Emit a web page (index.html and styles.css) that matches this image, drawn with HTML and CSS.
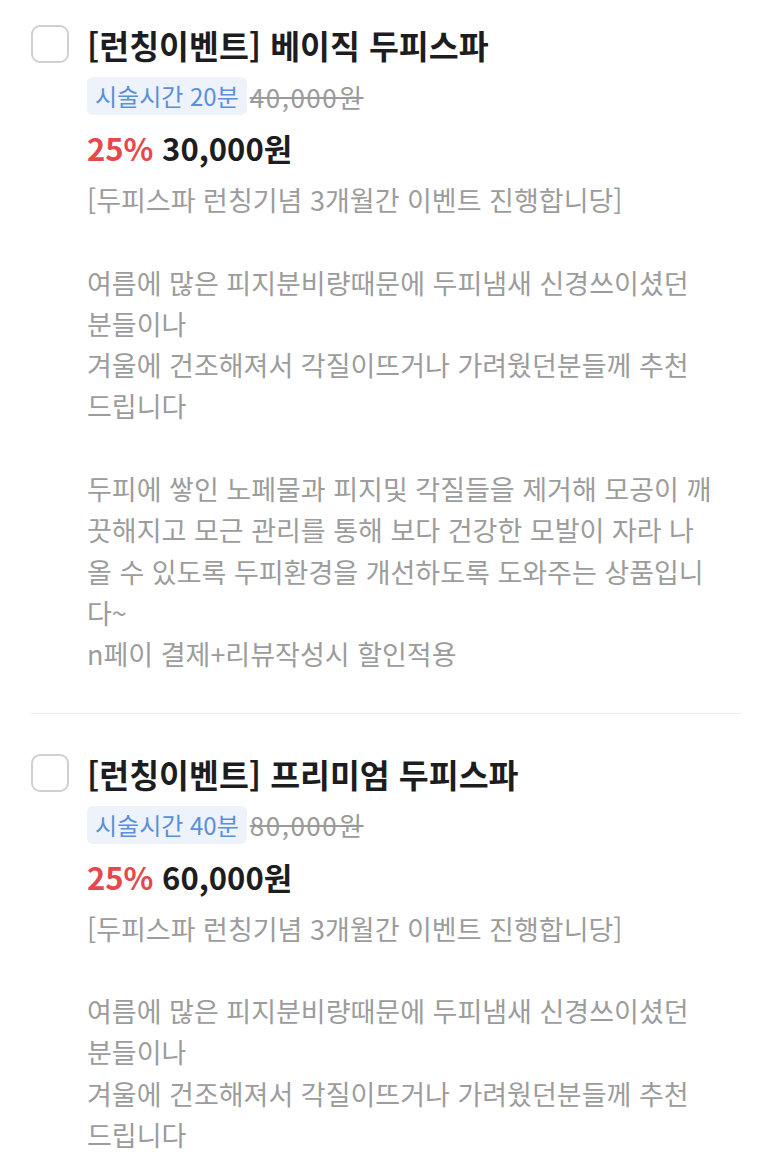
FILE: index.html
```html
<!DOCTYPE html>
<html lang="ko">
<head>
<meta charset="utf-8">
<link rel="stylesheet" href="styles.css">
</head>
<body>
<div class="list">
  <div class="item">
    <span class="check"></span>
    <div class="info">
      <div class="title">[런칭이벤트] 베이직 두피스파</div>
      <div class="meta"><span class="tag">시술시간 20분</span><span class="orig">40,000원</span></div>
      <div class="price"><span class="rate">25%</span> 30,000원</div>
      <p class="desc">[두피스파 런칭기념 3개월간 이벤트 진행합니당]

여름에 많은 피지분비량때문에 두피냄새 신경쓰이셨던
분들이나
겨울에 건조해져서 각질이뜨거나 가려웠던분들께 추천
드립니다

두피에 쌓인 노페물과 피지및 각질들을 제거해 모공이 깨
끗해지고 모근 관리를 통해 보다 건강한 모발이 자라 나
올 수 있도록 두피환경을 개선하도록 도와주는 상품입니
다~
n페이 결제+리뷰작성시 할인적용</p>
    </div>
  </div>
  <div class="item">
    <span class="check"></span>
    <div class="info">
      <div class="title">[런칭이벤트] 프리미엄 두피스파</div>
      <div class="meta"><span class="tag">시술시간 40분</span><span class="orig">80,000원</span></div>
      <div class="price"><span class="rate">25%</span> 60,000원</div>
      <p class="desc">[두피스파 런칭기념 3개월간 이벤트 진행합니당]

여름에 많은 피지분비량때문에 두피냄새 신경쓰이셨던
분들이나
겨울에 건조해져서 각질이뜨거나 가려웠던분들께 추천
드립니다</p>
    </div>
  </div>
</div>
</body>
</html>
```
FILE: styles.css
```css
html, body {
  margin: 0;
  padding: 0;
  background: #fff;
}
body {
  font-family: "Noto Sans CJK KR", "Noto Sans", sans-serif;
  color: #222;
}
.list {
  padding: 0 32px 0 31px;
  width: 710px;
}
.item {
  display: flex;
  align-items: flex-start;
  gap: 18px;
  padding: 25px 0 38px;
  border-bottom: 1px solid #ececec;
}
.item + .item {
  padding-top: 40px;
  border-bottom: none;
}
.check {
  flex: none;
  box-sizing: border-box;
  width: 38px;
  height: 38px;
  border: 2px solid #d0d0d0;
  border-radius: 9px;
}
.info {
  flex: 1;
  min-width: 0;
}
.title {
  font-size: 32.5px;
  font-weight: 600;
  line-height: 40px;
  color: #1d1d1f;
}
.meta {
  margin-top: 12px;
  display: flex;
  align-items: center;
}
.tag {
  display: inline-block;
  height: 38px;
  line-height: 38px;
  padding: 0 8px;
  border-radius: 6px;
  background: #edf2fb;
  color: #5b8fda;
  font-size: 24px;
}
.orig {
  margin-left: 3px;
  font-size: 26px;
  letter-spacing: 1.5px;
  color: #9a9a9a;
  text-decoration: line-through;
}
.price {
  margin-top: 15px;
  font-size: 31px;
  line-height: 36px;
  font-weight: 700;
  color: #1d1d1f;
}
.rate {
  color: #e5484d;
}
.desc {
  margin: 13px 0 0;
  white-space: pre-line;
  font-size: 27px;
  line-height: 41.3px;
  color: #9c9c9c;
}
```
